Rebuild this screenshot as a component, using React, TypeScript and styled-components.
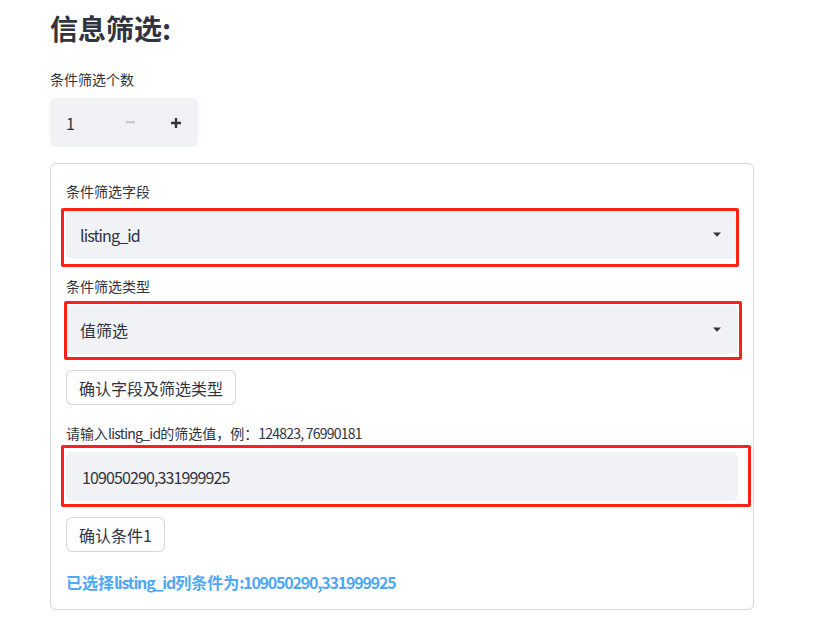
import React from 'react';
import styled, { createGlobalStyle } from 'styled-components';

const GlobalStyle = createGlobalStyle`
  body {
    margin: 0;
    background: #ffffff;
    font-family: "Noto Sans CJK SC", "Noto Sans", sans-serif;
    color: #31333f;
  }
`;

const TEXT = '#31333f';
const FIELD_BG = '#f0f2f6';
const BORDER = 'rgba(49, 51, 63, 0.2)';
const MARK = '#fa2218';

interface Offsets {
  top: number;
  right: number;
  bottom: number;
  left: number;
}

const Page = styled.div`
  width: 704px;
  padding: 8px 50px 20px;
  display: flex;
  flex-direction: column;
`;

const Title = styled.h3`
  margin: 0;
  font-size: 28px;
  font-weight: 700;
  line-height: 40px;
  color: ${TEXT};
`;

// latin runs are set a little tighter, the CJK font's latin is wider than the original
const Latin = styled.span<{ $tight?: number }>`
  letter-spacing: ${(p) => p.$tight || -0.055}em;
`;

const Label = styled.div<{ $mt?: number }>`
  font-size: 14px;
  line-height: 22px;
  color: ${TEXT};
  margin-top: ${(p) => p.$mt || 0}px;
  margin-bottom: 8px;
`;

const Stepper = styled.div`
  width: 148px;
  height: 49px;
  display: flex;
  align-items: stretch;
  background: ${FIELD_BG};
  border-radius: 6px;
  margin-bottom: 16px;
`;

const StepValue = styled.div`
  flex: 1;
  display: flex;
  align-items: center;
  padding-left: 16px;
  font-size: 16px;
  color: ${TEXT};
`;

const StepButton = styled.div`
  width: 45px;
  display: flex;
  align-items: center;
  justify-content: center;
`;

const Card = styled.div`
  border: 1px solid ${BORDER};
  border-radius: 6px;
  padding: 16px 15px 15px;
  display: flex;
  flex-direction: column;
`;

const Marked = styled.div`
  position: relative;
`;

const Annotation = styled.div<{ $o: Offsets }>`
  position: absolute;
  top: ${(p) => -p.$o.top}px;
  right: ${(p) => -p.$o.right}px;
  bottom: ${(p) => -p.$o.bottom}px;
  left: ${(p) => -p.$o.left}px;
  border: 3px solid ${MARK};
  border-radius: 2px;
  pointer-events: none;
`;

const Field = styled.div<{ $pad: number }>`
  height: 49px;
  display: flex;
  align-items: center;
  justify-content: space-between;
  padding: 0 17px 0 ${(p) => p.$pad}px;
  background: ${FIELD_BG};
  border-radius: 6px;
  font-size: 16px;
  color: ${TEXT};
`;

const Button = styled.button<{ $mt?: number }>`
  align-self: flex-start;
  height: 35px;
  margin-top: ${(p) => p.$mt || 16}px;
  padding: 0 12px;
  background: #ffffff;
  border: 1px solid ${BORDER};
  border-radius: 6px;
  font-family: inherit;
  font-size: 16px;
  color: ${TEXT};
`;

const Result = styled.div`
  margin-top: 18px;
  font-size: 16px;
  font-weight: 700;
  line-height: 24px;
  color: #4ea8f6;
`;

const Caret = () => (
  <svg width="8" height="5" viewBox="0 0 8 5">
    <path d="M0 0.5 H8 L4 4.8 Z" fill={TEXT} />
  </svg>
);

const Minus = () => (
  <svg width="9" height="3" viewBox="0 0 9 3">
    <rect x="0" y="0" width="9" height="2.4" fill="#c6c9d2" />
  </svg>
);

const Plus = () => (
  <svg width="10" height="10" viewBox="0 0 10 10">
    <path d="M5 0 V10 M0 5 H10" stroke={TEXT} strokeWidth="2.4" />
  </svg>
);

export default function App() {
  return (
    <>
      <GlobalStyle />
      <Page>
        <Title>信息筛选:</Title>
        <Label $mt={20}>条件筛选个数</Label>
        <Stepper>
          <StepValue>1</StepValue>
          <StepButton>
            <Minus />
          </StepButton>
          <StepButton>
            <Plus />
          </StepButton>
        </Stepper>

        <Card>
          <Label>条件筛选字段</Label>
          <Marked>
            <Field $pad={14}>
              <Latin>listing_id</Latin>
              <Caret />
            </Field>
            <Annotation $o={{ top: 2, right: 1, bottom: 8, left: 5 }} />
          </Marked>

          <Label $mt={16}>条件筛选类型</Label>
          <Marked>
            <Field $pad={14}>
              值筛选
              <Caret />
            </Field>
            <Annotation $o={{ top: 4, right: 4, bottom: 6, left: 2 }} />
          </Marked>

          <Button>确认字段及筛选类型</Button>

          <Label $mt={17}>
            请输入<Latin>listing_id</Latin>的筛选值，例：<Latin>124823, 76990181</Latin>
          </Label>
          <Marked>
            <Field $pad={16}>
              <Latin>109050290,331999925</Latin>
            </Field>
            <Annotation $o={{ top: 7, right: 13, bottom: 6, left: 5 }} />
          </Marked>

          <Button>确认条件1</Button>

          <Result>
            已选择<Latin $tight={-0.075}>listing_id</Latin>列条件为
            <Latin $tight={-0.075}>:109050290,331999925</Latin>
          </Result>
        </Card>
      </Page>
    </>
  );
}
